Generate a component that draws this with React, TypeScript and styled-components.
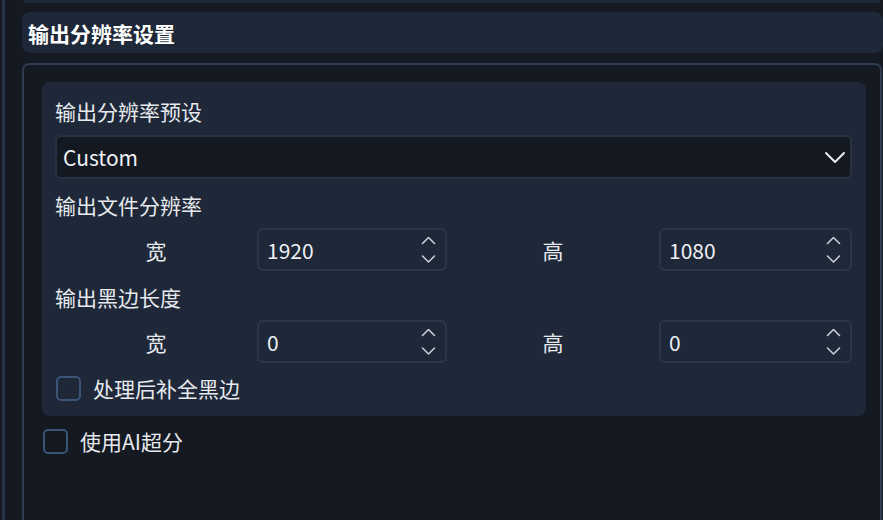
import React, { useState } from 'react'
import styled, { createGlobalStyle } from 'styled-components'

const GlobalStyle = createGlobalStyle`
    html, body {
        margin: 0;
        padding: 0;
        background: #151921;
        overflow: hidden;
    }
    * {
        box-sizing: border-box;
    }
`

const FONT = `'Noto Sans CJK SC', 'Noto Sans', sans-serif`

function ChevronDown() {
    return (
        <svg width='22' height='13' viewBox='0 0 22 13' fill='none'>
            <path d='M2 2 L11 11 L20 2' stroke='#e8ebf0' strokeWidth='2' strokeLinecap='round' strokeLinejoin='round' />
        </svg>
    )
}

function SpinArrows() {
    return (
        <svg width='15' height='28' viewBox='0 0 15 28' fill='none'>
            <path d='M1.5 7.5 L7.5 1.5 L13.5 7.5' stroke='#c9cdd5' strokeWidth='1.6' strokeLinecap='round' strokeLinejoin='round' />
            <path d='M1.5 20 L7.5 26 L13.5 20' stroke='#c9cdd5' strokeWidth='1.6' strokeLinecap='round' strokeLinejoin='round' />
        </svg>
    )
}

function SpinBox({ value }: { value: string }) {
    return (
        <SpinField>
            <SpinValue>{value}</SpinValue>
            <SpinButtons>
                <SpinArrows />
            </SpinButtons>
        </SpinField>
    )
}

function CheckBox({ label, indent }: { label: string; indent?: boolean }) {
    const [checked, setChecked] = useState(false)
    return (
        <CheckRow indent={indent} onClick={() => setChecked((c) => !c)}>
            <CheckMark checked={checked} />
            <CheckLabel>{label}</CheckLabel>
        </CheckRow>
    )
}

function SizeRow({ width, height }: { width: string; height: string }) {
    return (
        <SizeGrid>
            <SizeLabel>宽</SizeLabel>
            <SpinBox value={width} />
            <SizeLabel>高</SizeLabel>
            <SpinBox value={height} />
        </SizeGrid>
    )
}

export default function App() {
    return (
        <Page>
            <GlobalStyle />
            <Frame>
                <Content>
                    <PrevCard />
                    <SectionHeader>输出分辨率设置</SectionHeader>
                    <GroupBox>
                        <InnerCard>
                            <FieldLabel>输出分辨率预设</FieldLabel>
                            <Select>
                                <span>Custom</span>
                                <ChevronDown />
                            </Select>
                            <FieldLabel spaced>输出文件分辨率</FieldLabel>
                            <SizeRow width='1920' height='1080' />
                            <FieldLabel spaced>输出黑边长度</FieldLabel>
                            <SizeRow width='0' height='0' />
                            <CheckBox label='处理后补全黑边' />
                        </InnerCard>
                        <CheckBox label='使用AI超分' indent />
                    </GroupBox>
                </Content>
            </Frame>
        </Page>
    )
}

const Page = styled.div`
    height: 520px;
    width: 883px;
    background: #151921;
    padding-left: 2px;
    font-family: ${FONT};
    color: #e6e9ee;
    overflow: hidden;
`

const Frame = styled.div`
    height: 100%;
    border-left: 3px solid #26334a;
    padding-left: 17px;
`

const Content = styled.div`
    width: 861px;
    display: flex;
    flex-direction: column;
`

const PrevCard = styled.div`
    height: 3px;
    margin: 0 2px 0 1px;
    background: #1e2838;
    border-radius: 0 0 6px 6px;
`

const SectionHeader = styled.div`
    margin-top: 9px;
    height: 41px;
    display: flex;
    align-items: center;
    padding-left: 6px;
    background: #1e2838;
    border-radius: 8px;
    font-size: 21px;
    font-weight: 700;
    color: #ffffff;
`

const GroupBox = styled.div`
    margin-top: 10px;
    margin-right: 1px;
    height: 470px;
    border: 2px solid #2f3b52;
    border-bottom: none;
    border-radius: 7px 7px 0 0;
    padding: 17px 14px 0 18px;
`

const InnerCard = styled.div`
    background: #1e2838;
    border-radius: 8px;
    padding: 14px 14px 15px 13px;
    display: flex;
    flex-direction: column;
`

const FieldLabel = styled.div<{ spaced?: boolean }>`
    height: 30px;
    line-height: 30px;
    font-size: 21px;
    margin-top: ${(props) => (props.spaced ? '11px' : '0')};
    margin-bottom: ${(props) => (props.spaced ? '8px' : '9px')};
`

const Select = styled.div`
    height: 44px;
    display: flex;
    align-items: center;
    justify-content: space-between;
    padding: 0 4px 0 6px;
    background: #141820;
    border: 2px solid #283243;
    border-radius: 6px;
    font-size: 21px;
    color: #eef0f4;
    svg {
        margin-top: 1px;
    }
`

const SizeGrid = styled.div`
    display: grid;
    grid-template-columns: 202px 190px 212px 1fr;
    align-items: center;
`

const SizeLabel = styled.div`
    text-align: center;
    font-size: 21px;
`

const SpinField = styled.div`
    height: 43px;
    display: flex;
    align-items: center;
    justify-content: space-between;
    border: 2px solid #2c3649;
    border-radius: 6px;
    padding: 0 9px 0 8px;
    background: #1e2838;
`

const SpinValue = styled.span`
    font-size: 21px;
    color: #eef0f4;
`

const SpinButtons = styled.div`
    display: flex;
    align-items: center;
`

const CheckRow = styled.div<{ indent?: boolean }>`
    display: flex;
    align-items: center;
    gap: 12px;
    height: 26px;
    margin-top: 12px;
    margin-left: 1px;
    cursor: pointer;
`

const CheckMark = styled.div<{ checked: boolean }>`
    width: 25px;
    height: 25px;
    border: 2px solid #3b5576;
    border-radius: 5px;
    background: ${(props) => (props.checked ? '#3b5576' : 'transparent')};
`

const CheckLabel = styled.span`
    font-size: 21px;
    color: #e6e9ee;
`
